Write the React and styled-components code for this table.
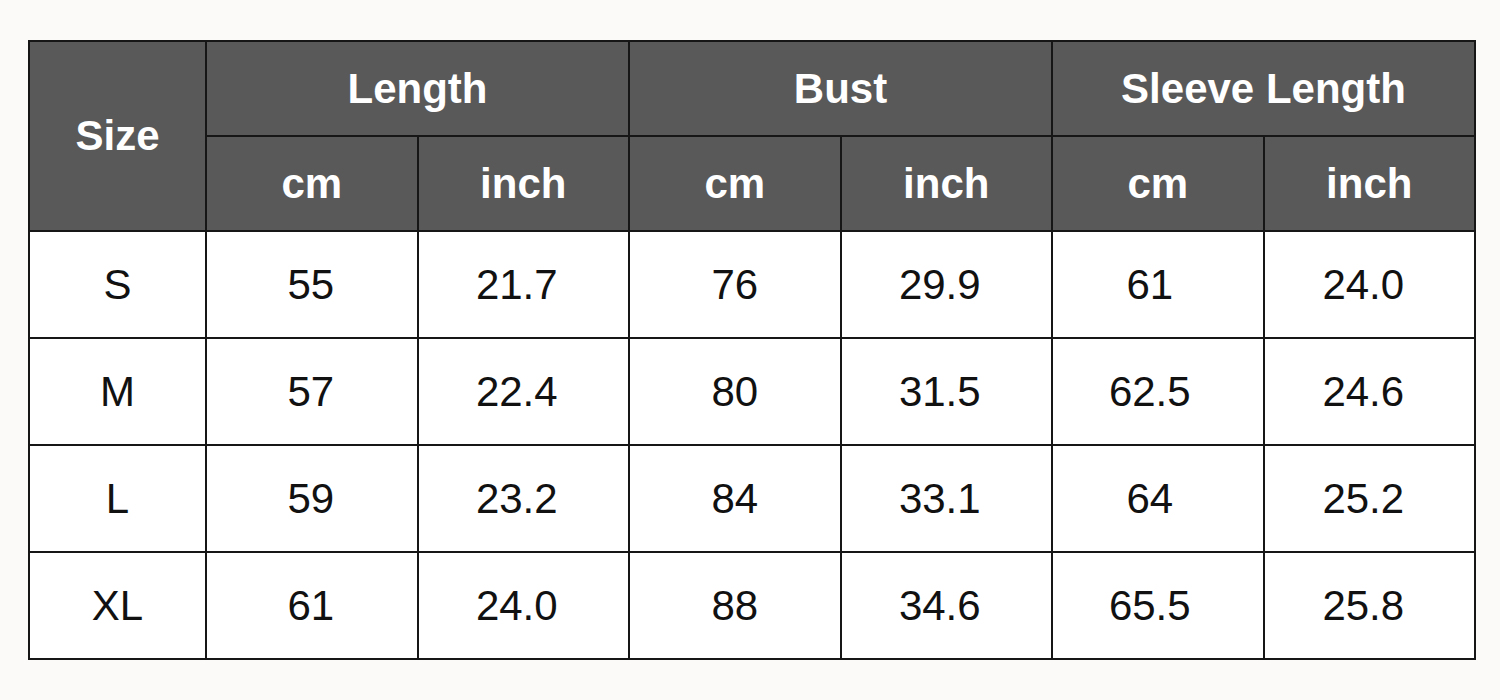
import React from "react";
import styled, { createGlobalStyle } from "styled-components";

const GlobalStyle = createGlobalStyle`
  body {
    margin: 0;
    background: #fbfaf8;
    font-family: "Liberation Sans", Arial, sans-serif;
  }
`;

const Page = styled.div`
  padding: 40px 0 0 28px;
`;

const Table = styled.table`
  width: 1448px;
  border-collapse: collapse;
  table-layout: fixed;
  background: #ffffff;
  border: 2px solid #161616;
`;

const HeadCell = styled.th`
  background: #595959;
  color: #ffffff;
  font-size: 42px;
  font-weight: 700;
  text-align: center;
  border: 2px solid #161616;
  padding: 0;
`;

const HeadRow = styled.tr`
  height: 95px;
`;

const BodyRow = styled.tr`
  height: 107px;
`;

const Cell = styled.td`
  color: #111111;
  font-size: 42px;
  text-align: center;
  border: 2px solid #161616;
  padding: 0 ${(props) => props.$nudge || 0}px 0 0;
`;

const groups = ["Length", "Bust", "Sleeve Length"];

// small leftward offsets seen in the source per column
const nudges = [0, 2, 13, 0, 13, 16, 12];

const rows = [
  ["S", "55", "21.7", "76", "29.9", "61", "24.0"],
  ["M", "57", "22.4", "80", "31.5", "62.5", "24.6"],
  ["L", "59", "23.2", "84", "33.1", "64", "25.2"],
  ["XL", "61", "24.0", "88", "34.6", "65.5", "25.8"],
];

const App = () => {
  return (
    <Page>
      <GlobalStyle />
      <Table>
        <colgroup>
          <col style={{ width: 177 }} />
          {[0, 1, 2, 3, 4, 5].map((i) => (
            <col key={i} />
          ))}
        </colgroup>
        <thead>
          <HeadRow>
            <HeadCell rowSpan={2}>Size</HeadCell>
            {groups.map((g) => (
              <HeadCell key={g} colSpan={2}>
                {g}
              </HeadCell>
            ))}
          </HeadRow>
          <HeadRow>
            {groups.map((g) => (
              <React.Fragment key={g}>
                <HeadCell>cm</HeadCell>
                <HeadCell>inch</HeadCell>
              </React.Fragment>
            ))}
          </HeadRow>
        </thead>
        <tbody>
          {rows.map((r) => (
            <BodyRow key={r[0]}>
              {r.map((v, i) => (
                <Cell key={i} $nudge={nudges[i]}>
                  {v}
                </Cell>
              ))}
            </BodyRow>
          ))}
        </tbody>
      </Table>
    </Page>
  );
};

export default App;
